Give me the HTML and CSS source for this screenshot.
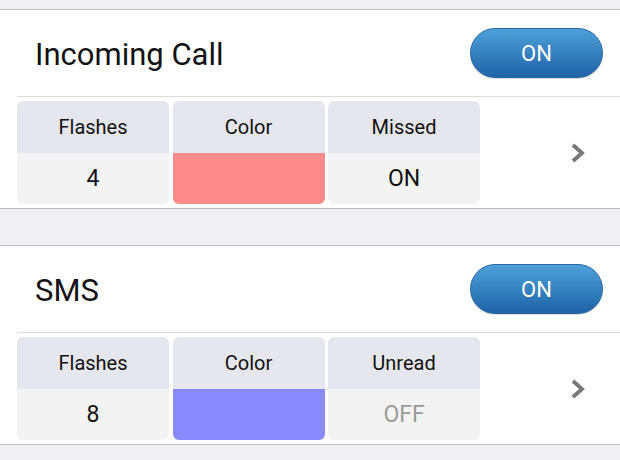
FILE: index.html
```html
<!DOCTYPE html>
<html>
<head>
<meta charset="utf-8">
<link rel="stylesheet" href="styles.css">
</head>
<body>
<div class="page">
  <section class="card">
    <div class="head">
      <div class="title">Incoming Call</div>
      <div class="toggle">ON</div>
    </div>
    <div class="row">
      <div class="cells">
        <div class="cell"><div class="lbl">Flashes</div><div class="val">4</div></div>
        <div class="cell"><div class="lbl">Color</div><div class="val swatch red"></div></div>
        <div class="cell"><div class="lbl">Missed</div><div class="val">ON</div></div>
      </div>
      <svg class="chev" width="16" height="22" viewBox="0 0 16 22"><polyline points="3,3 12,11 3,19" fill="none" stroke="#777" stroke-width="3.8"/></svg>
    </div>
  </section>
  <section class="card">
    <div class="head">
      <div class="title">SMS</div>
      <div class="toggle">ON</div>
    </div>
    <div class="row">
      <div class="cells">
        <div class="cell"><div class="lbl">Flashes</div><div class="val">8</div></div>
        <div class="cell"><div class="lbl">Color</div><div class="val swatch blue"></div></div>
        <div class="cell"><div class="lbl">Unread</div><div class="val off">OFF</div></div>
      </div>
      <svg class="chev" width="16" height="22" viewBox="0 0 16 22"><polyline points="3,3 12,11 3,19" fill="none" stroke="#777" stroke-width="3.8"/></svg>
    </div>
  </section>
</div>
</body>
</html>
```
FILE: styles.css
```css
html, body {
  margin: 0;
  padding: 0;
  background: #efeff4;
  font-family: Roboto, "Liberation Sans", sans-serif;
  color: #111;
}
.page {
  padding-top: 9px;
  display: flex;
  flex-direction: column;
  gap: 36px;
  height: 460px;
  overflow: hidden;
}
.card {
  background: #fff;
  border-top: 1px solid #bdbdbd;
  border-bottom: 1px solid #bdbdbd;
}
.head {
  height: 86px;
  display: flex;
  align-items: center;
  justify-content: space-between;
  padding: 0 17px 0 18px;
  margin-left: 17px;
  border-bottom: 1px solid #dcdcdc;
}
.title {
  font-size: 31px;
  padding-top: 2px;
}
.toggle {
  width: 131px;
  height: 48px;
  border: 1px solid #2a66a4;
  border-radius: 25px;
  background: linear-gradient(#4da0d8, #1f63a8);
  color: #fff;
  font-size: 22px;
  display: flex;
  align-items: center;
  justify-content: center;
  box-shadow: 0 1px 1px rgba(0,0,0,0.15);
}
.row {
  display: flex;
  align-items: center;
  padding: 4px 0 4px 17px;
}
.cells {
  display: grid;
  grid-template-columns: 152px 152px 152px;
  column-gap: 3.5px;
}
.cell {
  height: 103px;
  border-radius: 6px;
  overflow: hidden;
  display: flex;
  flex-direction: column;
}
.lbl {
  height: 52px;
  background: #e6e6ee;
  font-size: 20px;
  display: flex;
  align-items: center;
  justify-content: center;
}
.val {
  flex: 1;
  background: #f3f3f4;
  font-size: 23px;
  display: flex;
  align-items: center;
  justify-content: center;
}
.val.off { color: #9a9a9a; }
.swatch.red { background: #ff8a8a; }
.swatch.blue { background: #8a8aff; }
.chev {
  margin-left: 90px;
}
```
